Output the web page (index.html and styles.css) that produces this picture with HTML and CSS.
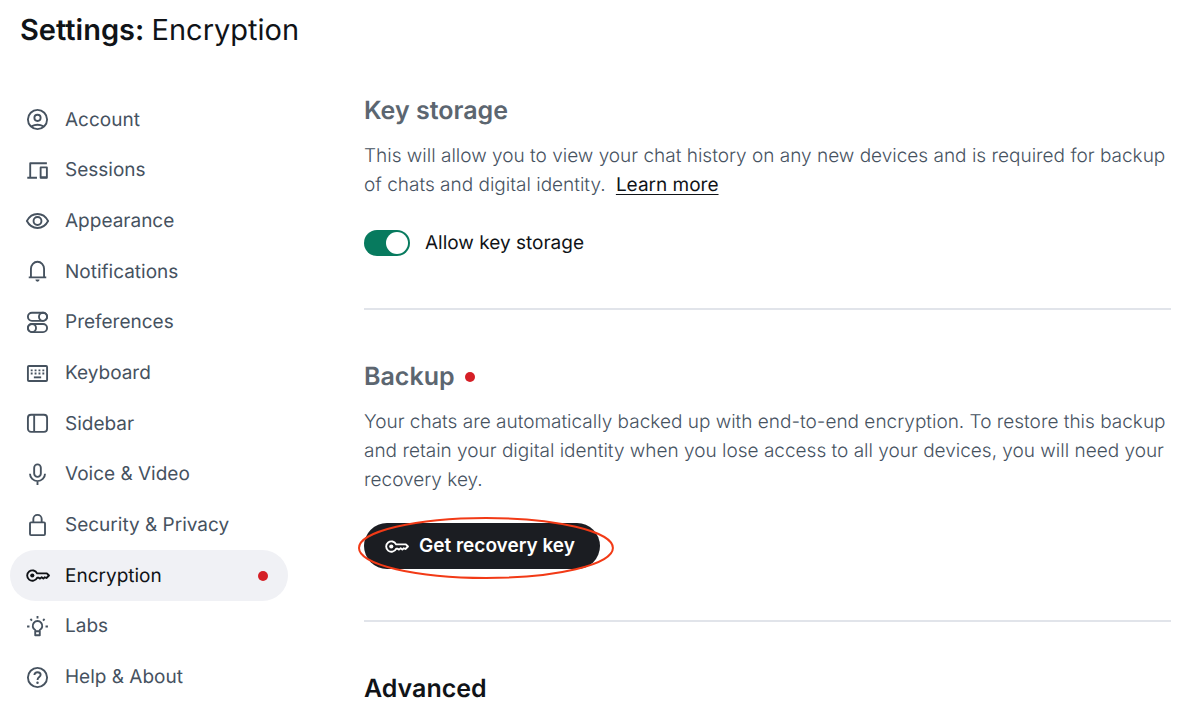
FILE: index.html
```
<!DOCTYPE html>
<html lang="en">

<head>
	<meta charset="UTF-8">
	<meta name="viewport" content="width=device-width, initial-scale=1.0">
	<title>Settings: Encryption</title>
	<link rel="stylesheet" href="styles.css">
</head>

<body>

	<svg class="sprite" aria-hidden="true">
		<symbol id="icon-key" viewBox="0 0 24 24">
			<circle cx="7" cy="12" r="2" fill="currentColor" stroke="none" />
			<path d="M11.6 9.9H21L23 12L20.6 14.4L19 13.7L17.6 15L16 13.7L14.4 15L13.2 14.2H11.6A5 5 0 1 1 11.6 9.9Z" />
		</symbol>
	</svg>

	<header class="header">
		<h1 class="header-title">Settings: <span>Encryption</span></h1>
	</header>

	<div class="settings">
		<nav class="nav" aria-label="Settings">
			<a class="nav-item" href="#account">
				<svg class="icon" viewBox="0 0 24 24">
					<circle cx="12" cy="12" r="9.2" />
					<circle cx="12" cy="10.4" r="3" />
					<path d="M6.2 18.6Q12 15.5 17.8 18.6" />
				</svg>
				<span>Account</span>
			</a>
			<a class="nav-item" href="#sessions">
				<svg class="icon" viewBox="0 0 24 24">
					<path d="M21 5H5V18.2M2.2 19H11.5" />
					<rect x="15" y="9" width="6" height="10" />
					<path d="M15 18.5H21" />
				</svg>
				<span>Sessions</span>
			</a>
			<a class="nav-item" href="#appearance">
				<svg class="icon" viewBox="0 0 24 24">
					<path d="M1.8 11.5C4.2 7 7.8 4.8 12 4.8S19.8 7 22.2 11.5C19.8 16 16.2 18.2 12 18.2S4.2 16 1.8 11.5Z" />
					<circle cx="12" cy="11.5" r="3.8" />
				</svg>
				<span>Appearance</span>
			</a>
			<a class="nav-item" href="#notifications">
				<svg class="icon" viewBox="0 0 24 24">
					<path d="M3.6 17.6H20.4M5.7 17.4V9.4A6.3 6.8 0 0 1 18.3 9.4V17.4" />
					<path d="M10 19.8H14A2 2 0 0 1 10 19.8Z" fill="currentColor" stroke="none" />
				</svg>
				<span>Notifications</span>
			</a>
			<a class="nav-item" href="#preferences">
				<svg class="icon" viewBox="0 0 24 24">
					<rect x="2.8" y="2.6" width="18.4" height="7.8" rx="3.9" />
					<circle cx="17.3" cy="6.5" r="3.9" />
					<rect x="2.8" y="13.4" width="18.4" height="7.8" rx="3.9" />
					<circle cx="6.7" cy="17.3" r="3.9" />
				</svg>
				<span>Preferences</span>
			</a>
			<a class="nav-item" href="#keyboard">
				<svg class="icon" viewBox="0 0 24 24">
					<rect x="2.8" y="4.8" width="18.4" height="14.4" rx="1" />
					<path d="M5.5 9H18.5M5.5 12H18.5" stroke-dasharray="1.8 1.93" />
					<path d="M8.5 15.7H15.5" />
				</svg>
				<span>Keyboard</span>
			</a>
			<a class="nav-item" href="#sidebar">
				<svg class="icon" viewBox="0 0 24 24">
					<rect x="2.8" y="3.6" width="18.4" height="16.4" rx="3" />
					<path d="M8.8 4V20" />
				</svg>
				<span>Sidebar</span>
			</a>
			<a class="nav-item" href="#voice">
				<svg class="icon" viewBox="0 0 24 24">
					<rect x="8.8" y="2.3" width="6.4" height="12" rx="3.2" />
					<path d="M4.8 11.3A7.2 7 0 0 0 19.2 11.3M12 18V22" />
				</svg>
				<span>Voice &amp; Video</span>
			</a>
			<a class="nav-item" href="#security">
				<svg class="icon" viewBox="0 0 24 24">
					<rect x="4.8" y="9" width="14.4" height="12.2" rx="1" />
					<path d="M8 9V5.8A4 4 0 0 1 16 5.8V9" />
				</svg>
				<span>Security &amp; Privacy</span>
			</a>
			<a class="nav-item nav-item-active" href="#encryption" aria-current="page">
				<svg class="icon"><use href="#icon-key" /></svg>
				<span>Encryption</span>
				<i class="dot"></i>
			</a>
			<a class="nav-item" href="#labs">
				<svg class="icon" viewBox="0 0 24 24">
					<path d="M9.8 16.5V15.4A4.6 4.6 0 1 1 14.2 15.4V16.5ZM9.8 16.5V20.4H14.2V16.5" />
					<path d="M12 2V4.3M2 12H4.3M19.7 12H22M5.2 4.8L6.7 6.3M18.8 4.8L17.3 6.3" />
				</svg>
				<span>Labs</span>
			</a>
			<a class="nav-item" href="#help">
				<svg class="icon" viewBox="0 0 24 24">
					<circle cx="12" cy="12" r="9.2" />
					<path d="M9 9.6C9.2 7.8 10.3 6.9 12 6.9C13.8 6.9 15 7.9 15 9.4C15 11.5 12 11.6 12 14.3" />
					<circle cx="12" cy="17" r="1.2" fill="currentColor" stroke="none" />
				</svg>
				<span>Help &amp; About</span>
			</a>
		</nav>

		<main class="content">
			<section class="section">
				<h2 class="section-title">Key storage</h2>
				<p class="section-text">This will allow you to view your chat history on any new devices and is required for backup of chats and digital identity. <a class="link" href="#learn-more">Learn more</a></p>
				<div class="toggle-row">
					<input class="toggle" id="key-storage" type="checkbox" role="switch" checked>
					<label for="key-storage">Allow key storage</label>
				</div>
			</section>

			<section class="section">
				<h2 class="section-title">Backup <i class="dot"></i></h2>
				<p class="section-text">Your chats are automatically backed up with end-to-end encryption. To restore this backup and retain your digital identity when you lose access to all your devices, you will need your recovery key.</p>
				<div class="highlight">
					<button class="btn" type="button">
						<svg class="icon"><use href="#icon-key" /></svg>
						Get recovery key
					</button>
					<svg class="highlight-ring" viewBox="0 0 256 62" preserveAspectRatio="none" aria-hidden="true">
						<ellipse cx="128" cy="31" rx="127" ry="30" />
					</svg>
				</div>
			</section>

			<section class="section">
				<h2 class="section-title section-title-dark">Advanced</h2>
			</section>
		</main>
	</div>

</body>

</html>
```
FILE: styles.css
```
* {
	margin: 0;
	padding: 0;
	box-sizing: border-box;
}

body {
	background: #fff;
	color: #101317;
	font-family: Inter, 'Liberation Sans', Arial, sans-serif;
	font-size: 19px;
	line-height: 28px;
	text-rendering: geometricPrecision;
}

.sprite {
	display: none;
}

.icon {
	flex: none;
	width: 25px;
	height: 25px;
	fill: none;
	stroke: currentColor;
	stroke-width: 1.8;
	stroke-linejoin: round;
}

.dot {
	flex: none;
	width: 10px;
	height: 10px;
	border-radius: 50%;
	background: #d51f26;
}

.header {
	padding: 10px 20px;
}

.header-title {
	font-size: 29px;
	font-weight: 600;
	line-height: 40px;
}

.header-title span {
	font-weight: 400;
}

.settings {
	display: flex;
	align-items: flex-start;
	gap: 76px;
	padding: 34px 29px 0 10px;
}

.nav {
	display: grid;
	grid-auto-rows: 1fr;
	flex: none;
	width: 278px;
	min-height: 608px;
}

.nav-item {
	display: flex;
	align-items: center;
	gap: 15px;
	padding: 1px 20px 0 15px;
	border-radius: 26px;
	color: #46525f;
	text-decoration: none;
}

.nav-item-active {
	background: #f0f1f5;
	color: #101317;
}

.nav-item .dot {
	margin-left: auto;
}

.content {
	flex: 1;
	min-width: 0;
}

.section {
	padding-bottom: 51px;
}

.section:last-child {
	padding-bottom: 0;
}

.section + .section {
	padding-top: 50px;
	border-top: 2px solid #e1e4ea;
}

.section-title {
	display: flex;
	align-items: center;
	gap: 10px;
	color: #5c6670;
	font-size: 25px;
	font-weight: 600;
	line-height: 34px;
}

.section-title-dark {
	color: #101317;
}

.section-text {
	margin-top: 13px;
	color: #46525f;
	font-weight: 300;
	line-height: 29px;
}

.link {
	margin-left: 5px;
	color: #101317;
	font-weight: 400;
	text-decoration: underline;
	text-decoration-thickness: 1px;
	text-decoration-skip-ink: none;
	text-underline-offset: 3px;
}

.toggle-row {
	display: flex;
	align-items: center;
	gap: 15px;
	margin-top: 30px;
}

.toggle {
	display: flex;
	justify-content: flex-end;
	width: 46px;
	height: 26px;
	padding: 2px;
	border-radius: 13px;
	background: #077a5e;
	appearance: none;
	cursor: pointer;
}

.toggle::before {
	content: '';
	width: 22px;
	height: 22px;
	border-radius: 50%;
	background: #fff;
}

.toggle:not(:checked) {
	justify-content: flex-start;
	background: #818a95;
}

.highlight {
	position: relative;
	width: fit-content;
	margin-top: 29px;
}

.btn {
	display: flex;
	align-items: center;
	gap: 10px;
	height: 46px;
	padding: 0 25px 0 20px;
	border: 0;
	border-radius: 23px;
	background: #1b1d22;
	color: #fff;
	font: inherit;
	font-weight: 600;
	cursor: pointer;
}

/* ring drawn around the button */
.highlight-ring {
	position: absolute;
	top: -6px;
	left: -6px;
	width: calc(100% + 20px);
	height: 62px;
	fill: none;
	stroke: #f23a16;
	stroke-width: 2;
	pointer-events: none;
}
```
